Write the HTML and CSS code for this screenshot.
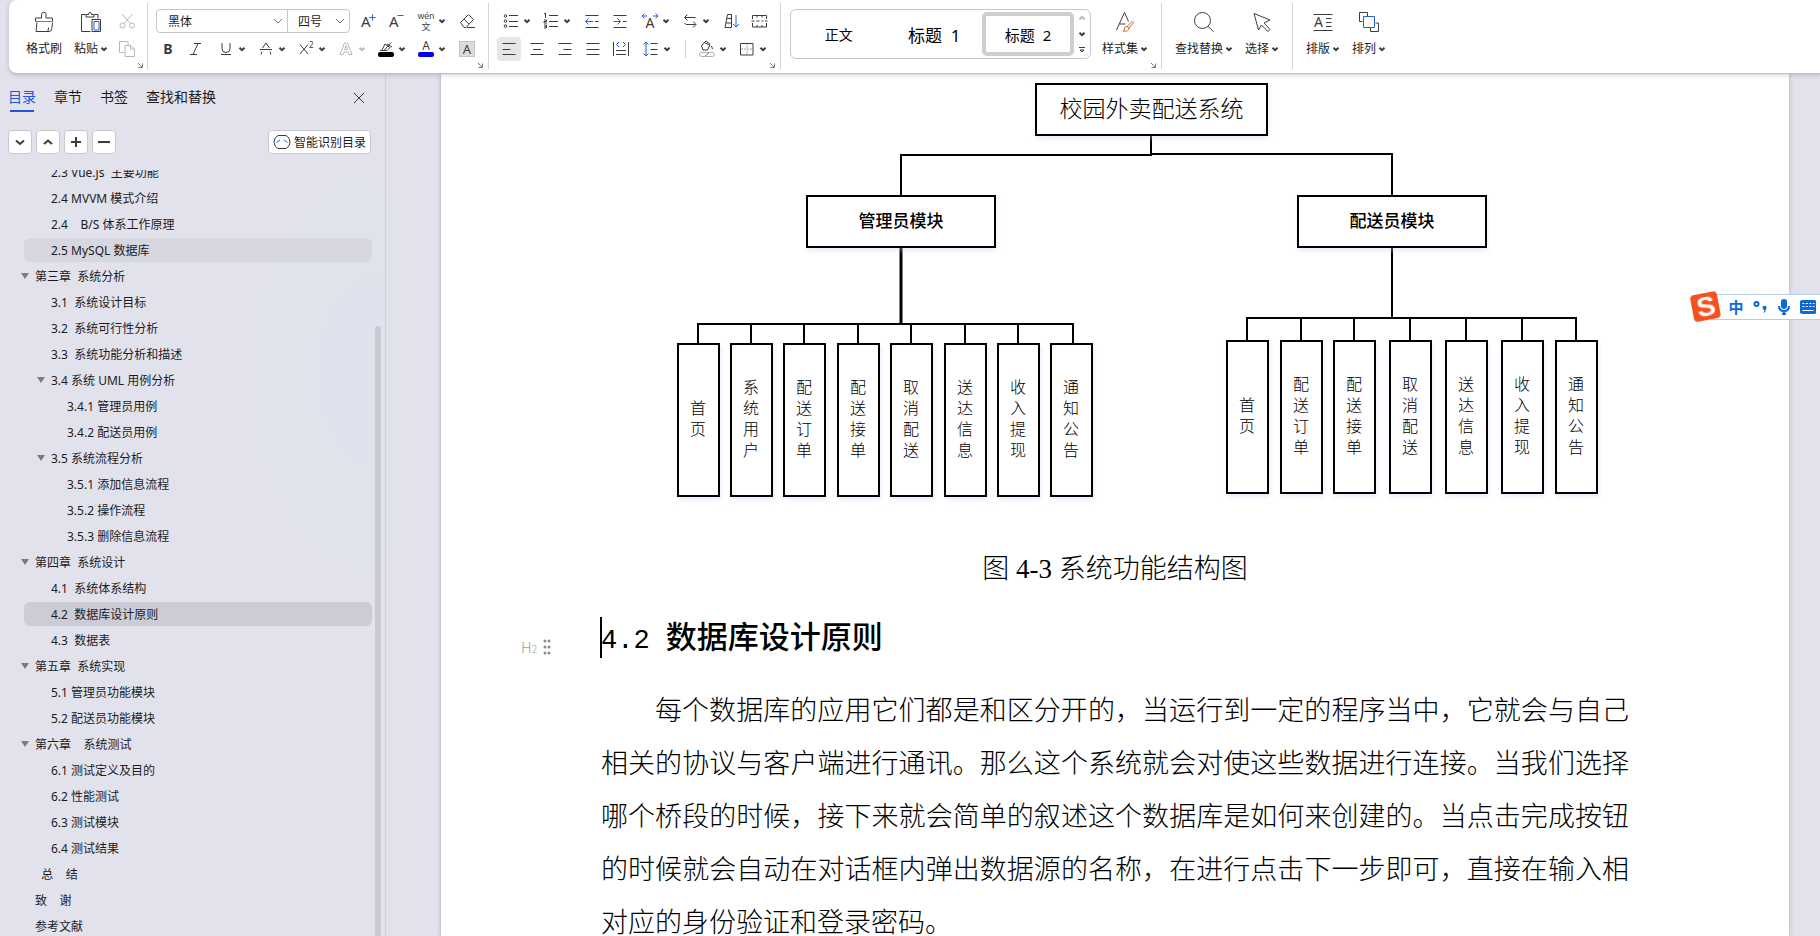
FILE: index.html
```html
<!DOCTYPE html>
<html lang="zh-CN">
<head>
  <meta charset="UTF-8" />
  <meta name="viewport" content="width=device-width, initial-scale=1" />
  <title>校园外卖配送系统</title>
  <link rel="stylesheet" href="styles.css">
</head>
<body>
  <svg class="defs" aria-hidden="true">
    <symbol id="chev" viewBox="0 0 8 8"><path d="M1.5 2.8 4 5.2 6.5 2.8" /></symbol>
    <symbol id="corner" viewBox="0 0 8 8"><path d="M2 2l4 4M6.5 2.5v4h-4" /></symbol>
  </svg>

  <header class="ribbon">
    <section class="group group-clip">
      <button class="big">
        <svg class="icon" viewBox="0 0 24 24"><path d="M9.5 8V4.5a2 2 0 0 1 4.500 0V8h6.500v3.500M3.500 11.500V8h6M5 12.500 4 21.500h13.500q2 0 2.300-3l.7-6M15.500 21.500q1-1 1-4" /><path class="orange" d="M3.500 11.500h17" /></svg>
        <span class="label">格式刷</span>
      </button>
      <button class="big">
        <svg class="icon" viewBox="0 0 24 24"><path d="M6.5 4.500H2.500v17h9M15.500 4.500h3.500v4M7 7V4.500h2.500q0-2 1.500-2t1.500 2H15V7zM13 21.500V9.500h8.500v12z" /><path class="blue" d="M15 11.500h5v8.500h-5z" /></svg>
        <span class="label">粘贴<svg class="chev"><use href="#chev" /></svg></span>
      </button>
      <div class="stack">
        <button class="tool off" aria-label="剪切"><svg class="icon" viewBox="0 0 24 24"><path d="M7 5l8.500 9.500M17.500 5 9 14.500" /><circle cx="7.500" cy="16.500" r="2.500" /><circle cx="17" cy="16.500" r="2.500" /></svg></button>
        <button class="tool off" aria-label="复制"><svg class="icon" viewBox="0 0 24 24"><path d="M9 15.500H4.500v-11H13V8M10 8.500h6l3.500 3.500v7.500H10zM15.500 8.500V12h4" /></svg></button>
      </div>
      <button class="corner" aria-label="剪贴板"><svg><use href="#corner" /></svg></button>
    </section>

    <section class="group">
      <div class="stack">
        <div class="row">
          <div class="font-box">
            <select class="font-name" aria-label="字体"><option>黑体</option></select>
            <select class="font-size" aria-label="字号"><option>四号</option></select>
          </div>
          <button class="tool" aria-label="增大字号"><svg class="icon" viewBox="0 0 24 24"><text x="5" y="18" font-size="15">A</text><path class="blue" d="M13.500 8.500h6M16.500 5.500v6" /></svg></button>
          <button class="tool" aria-label="减小字号"><svg class="icon" viewBox="0 0 24 24"><text x="5" y="18" font-size="15">A</text><path class="blue" d="M13.500 6.500h6" /></svg></button>
          <button class="tool drop" aria-label="拼音指南"><svg class="icon" viewBox="0 0 24 24"><text class="pinyin" x="12" y="10" font-size="9" text-anchor="middle">wén</text><text x="12" y="21" font-size="9" text-anchor="middle">文</text></svg><svg class="chev"><use href="#chev" /></svg></button>
          <button class="tool" aria-label="清除格式"><svg class="icon" viewBox="0 0 24 24"><path d="M5.500 13.500 13.500 5.500l5 5-7.500 8H9zM9 10l5 5M12 18.500h8" /></svg></button>
        </div>
        <div class="row">
          <button class="tool" aria-label="加粗"><svg class="icon" viewBox="0 0 24 24"><text x="12" y="17" font-size="14" font-weight="700" text-anchor="middle">B</text></svg></button>
          <button class="tool" aria-label="倾斜"><svg class="icon" viewBox="0 0 24 24"><path d="M10 6.500h7M6 17.500h7M14 6.500 9 17.500" /></svg></button>
          <button class="tool drop" aria-label="下划线"><svg class="icon" viewBox="0 0 24 24"><path d="M8 6v5.500a4 4 0 0 0 8 0V6M7 17.500h10" /></svg><svg class="chev"><use href="#chev" /></svg></button>
          <button class="tool drop" aria-label="删除线"><svg class="icon" viewBox="0 0 24 24"><path d="M8.500 11 12 6l3.500 5M6 12.500h12M8 14.500 7 17.500M16 14.500l1 3" /></svg><svg class="chev"><use href="#chev" /></svg></button>
          <button class="tool drop" aria-label="上标"><svg class="icon" viewBox="0 0 24 24"><path d="M6 7.500l8 9.500M14 7.500 6 17" /><text x="15" y="11" font-size="8">2</text></svg><svg class="chev"><use href="#chev" /></svg></button>
          <button class="tool drop off" aria-label="文字效果"><svg class="icon" viewBox="0 0 24 24"><path d="M6 17.500 10.500 6h3L18 17.500h-3l-1-2.500h-4l-1 2.500zM10.500 12.500h3L12 8.500z" /></svg><svg class="chev"><use href="#chev" /></svg></button>
          <button class="tool drop" aria-label="突出显示"><svg class="icon" viewBox="0 0 24 24"><path d="M6 13.500h4l7-8M8 13l3-6 5 3.500-3 3h-4M13 7l5 3" /><rect class="bar-black" x="4" y="15" width="16" height="5" rx="2" /></svg><svg class="chev"><use href="#chev" /></svg></button>
          <button class="tool drop" aria-label="字体颜色"><svg class="icon" viewBox="0 0 24 24"><text x="12" y="13" font-size="12" text-anchor="middle">A</text><rect class="bar-blue" x="4" y="15" width="16" height="5" rx="2" /></svg><svg class="chev"><use href="#chev" /></svg></button>
          <button class="tool" aria-label="字符底纹"><svg class="icon" viewBox="0 0 24 24"><rect class="shade" x="4.500" y="4.500" width="15" height="15" /><text x="12" y="17" font-size="13" text-anchor="middle">A</text></svg></button>
        </div>
      </div>
      <button class="corner" aria-label="字体设置"><svg><use href="#corner" /></svg></button>
    </section>

    <section class="group">
      <div class="stack">
        <div class="row">
          <button class="tool drop" aria-label="项目符号"><svg class="icon" viewBox="0 0 24 24"><circle cx="6.500" cy="7" r="1.300" /><circle cx="6.500" cy="12" r="1.300" /><circle cx="6.500" cy="17" r="1.300" /><path d="M10 6.500h9M10 12.500h9M10 17.500h9" /></svg><svg class="chev"><use href="#chev" /></svg></button>
          <button class="tool drop" aria-label="编号"><svg class="icon" viewBox="0 0 24 24"><path d="M5 5l1.500-1v5M5 11h2.500v1.500H5V14h3M5 16h2.500v3H5M5.500 17.500h2M10 6.500h9M10 12.500h9M10 17.500h9" /></svg><svg class="chev"><use href="#chev" /></svg></button>
          <button class="tool" aria-label="减少缩进"><svg class="icon" viewBox="0 0 24 24"><path d="M5.500 6.500h13M15 12.500h3.500M5.500 18.500h13" /><path class="blue" d="M13 12.500H6M8.500 9.500l-3 3 3 3" /></svg></button>
          <button class="tool" aria-label="增加缩进"><svg class="icon" viewBox="0 0 24 24"><path d="M5.500 6.500h13M15 12.500h3.500M5.500 18.500h13" /><path class="blue" d="M5.500 12.500H12M9.500 9.500l3 3-3 3" /></svg></button>
          <button class="tool drop" aria-label="中文版式"><svg class="icon" viewBox="0 0 24 24"><text x="12" y="19" font-size="14" text-anchor="middle">A</text><path class="blue" d="M4 7h5M15 7h5M6.500 4.500 4 7l2.500 2.500M17.500 4.500 20 7l-2.500 2.500" /></svg><svg class="chev"><use href="#chev" /></svg></button>
          <button class="tool drop" aria-label="换行"><svg class="icon" viewBox="0 0 24 24"><path d="M17.500 8.500H7M9.500 5.500 6.500 8.500l3 3M8 15.500h9.500M15 12.500l3 3-3 3M6.500 14l1.500 1.500" /></svg><svg class="chev"><use href="#chev" /></svg></button>
          <button class="tool" aria-label="排序"><svg class="icon" viewBox="0 0 24 24"><path d="M6 18.500 8.500 5.500h4v13zM8 9.500h4.500M7 14h5.500" /><path class="blue" d="M17 6v12M14 15l3 3 3-3" /></svg></button>
          <button class="tool" aria-label="制表"><svg class="icon" viewBox="0 0 24 24"><path d="M5.500 10V6.500h14V10M5.500 14v4h14v-4M4.500 12h3M9.500 12h3M14.500 12h2M18 12h2.500M10 6.500v2M15 6.500v2M10 16v2M15 16v2" /></svg></button>
        </div>
        <div class="row">
          <button class="tool active" aria-label="左对齐"><svg class="icon" viewBox="0 0 24 24"><path d="M5.500 6.500h13M5.500 12.500h8M5.500 17.500h13" /></svg></button>
          <button class="tool" aria-label="居中"><svg class="icon" viewBox="0 0 24 24"><path d="M5.500 6.500h13M8 12.500h8M5.500 17.500h13" /></svg></button>
          <button class="tool" aria-label="右对齐"><svg class="icon" viewBox="0 0 24 24"><path d="M5.500 6.500h13M10.500 12.500h8M5.500 17.500h13" /></svg></button>
          <button class="tool" aria-label="两端对齐"><svg class="icon" viewBox="0 0 24 24"><path d="M5.500 6.500h13M5.500 12.500h13M5.500 17.500h13" /></svg></button>
          <button class="tool" aria-label="分散对齐"><svg class="icon" viewBox="0 0 24 24"><path d="M4.500 5v14M19.500 5v14M7 13.500h10M7 17.500h10" /><path class="blue" d="M10 5 7.500 7.500 10 10M14 5l2.500 2.500L14 10" /></svg></button>
          <button class="tool drop" aria-label="行距"><svg class="icon" viewBox="0 0 24 24"><path d="M11.500 6.500h7M11.500 12.500h7M11.500 17.500h7" /><path class="blue" d="M7 5v14M4.500 7.500 7 5l2.500 2.500M4.500 16.500 7 19l2.500-2.500" /></svg><svg class="chev"><use href="#chev" /></svg></button>
          <span class="sep"></span>
          <button class="tool drop" aria-label="底纹颜色"><svg class="icon" viewBox="0 0 24 24"><path d="M9 5.500l6 2.500-2.500 5H8L6.500 9zM9 6l2-2 4 3M16.500 9l1 3" /><rect class="bar-none" x="4.500" y="15.500" width="15" height="4" rx="2" /><path class="red" d="M10 19l4-3" /></svg><svg class="chev"><use href="#chev" /></svg></button>
          <button class="tool drop" aria-label="边框"><svg class="icon" viewBox="0 0 24 24"><path class="dots" d="M12 6v12M6 12h12" /><path d="M5.500 6.500h12.500v11.500H5.500z" /></svg><svg class="chev"><use href="#chev" /></svg></button>
        </div>
      </div>
      <button class="corner" aria-label="段落设置"><svg><use href="#corner" /></svg></button>
    </section>

    <section class="group group-styles">
      <div class="style-box">
        <button class="style-item style-body">正文</button>
        <button class="style-item style-h1">标题  1</button>
        <button class="style-item style-h2">标题  2</button>
        <div class="style-scroll">
          <button class="off" aria-label="上一行"><svg class="chev up"><use href="#chev" /></svg></button>
          <button aria-label="下一行"><svg class="chev"><use href="#chev" /></svg></button>
          <button aria-label="更多样式"><svg class="more" viewBox="0 0 8 8"><path d="M1 1.500h6M2 4l2 2 2-2z" /></svg></button>
        </div>
      </div>
      <button class="big">
        <svg class="icon" viewBox="0 0 24 24"><path d="M3.500 20 11.500 2.500l4 9M6.500 14h6" /><path class="orange" d="M20 10.500l-6 6M21 12l-5 6M14 16.500l2 1.500q0 4-6 3 2-1 1.500-3 1-2 2.500-1.500z" /></svg>
        <span class="label">样式集<svg class="chev"><use href="#chev" /></svg></span>
      </button>
      <button class="corner" aria-label="样式设置"><svg><use href="#corner" /></svg></button>
    </section>

    <section class="group group-wide">
      <button class="big">
        <svg class="icon" viewBox="0 0 24 24"><circle cx="10.500" cy="10.500" r="8" /><path d="M16 16.500l5.500 5" /></svg>
        <span class="label">查找替换<svg class="chev"><use href="#chev" /></svg></span>
      </button>
      <button class="big">
        <svg class="icon" viewBox="0 0 24 24"><path d="M4 3.500 20 10l-6 3 6 6.500-2 2-6.500-6.500L8.500 20z" /></svg>
        <span class="label">选择<svg class="chev"><use href="#chev" /></svg></span>
      </button>
    </section>

    <section class="group group-wide group-last">
      <button class="big">
        <svg class="icon" viewBox="0 0 24 24"><path d="M2.500 4.500h19M2.500 20.500h19M15 8.500h5.500M15 12.500h5.500M15 16.500h5.500" /><text x="3" y="17" font-size="14">A</text></svg>
        <span class="label">排版<svg class="chev"><use href="#chev" /></svg></span>
      </button>
      <button class="big">
        <svg class="icon" viewBox="0 0 24 24"><path d="M5.500 11.500h-3v-9h8v3.500M18.500 13h3v8.500h-8V18" /><path class="blue" d="M6.500 6.500h11v11h-11z" /></svg>
        <span class="label">排列<svg class="chev"><use href="#chev" /></svg></span>
      </button>
    </section>
  </header>

  <div class="workspace">
    <aside class="nav">
      <div class="tabs">
        <button class="tab current">目录</button>
        <button class="tab">章节</button>
        <button class="tab">书签</button>
        <button class="tab">查找和替换</button>
        <button class="close" aria-label="关闭"><svg viewBox="0 0 12 12"><path d="M1 1l10 10M11 1 1 11" /></svg></button>
      </div>
      <div class="nav-tools">
        <button class="sq" aria-label="展开"><svg viewBox="0 0 12 12"><path d="M2 4.500l4 3.500 4-3.500" /></svg></button>
        <button class="sq" aria-label="收起"><svg viewBox="0 0 12 12"><path d="M2 8l4-3.500L10 8" /></svg></button>
        <button class="sq" aria-label="添加"><svg viewBox="0 0 12 12"><path d="M1 6h10M6 1v10" /></svg></button>
        <button class="sq" aria-label="删除"><svg viewBox="0 0 12 12"><path d="M0 6h12" /></svg></button>
        <button class="smart"><svg viewBox="0 0 18 18"><path d="M5 2.500h8q4 2 4 6.500t-4 6.500H5Q1 13.500 1 9t4-6.500z" /><path class="blue" d="M3.500 9.500 7 7M11 7l3.500 2.500" /></svg>智能识别目录</button>
      </div>
      <div class="outline">
        <ul class="tree">
          <li class="l2"><a href="#">2.3 Vue.js  主要功能</a></li>
          <li class="l2"><a href="#">2.4 MVVM 模式介绍</a></li>
          <li class="l2"><a href="#">2.4    B/S 体系工作原理</a></li>
          <li class="l2 hover"><a href="#">2.5 MySQL 数据库</a></li>
          <li class="l1"><button class="toggle" aria-label="折叠"></button><a href="#">第三章  系统分析</a></li>
          <li class="l2"><a href="#">3.1  系统设计目标</a></li>
          <li class="l2"><a href="#">3.2  系统可行性分析</a></li>
          <li class="l2"><a href="#">3.3  系统功能分析和描述</a></li>
          <li class="l2"><button class="toggle" aria-label="折叠"></button><a href="#">3.4 系统 UML 用例分析</a></li>
          <li class="l3"><a href="#">3.4.1 管理员用例</a></li>
          <li class="l3"><a href="#">3.4.2 配送员用例</a></li>
          <li class="l2"><button class="toggle" aria-label="折叠"></button><a href="#">3.5 系统流程分析</a></li>
          <li class="l3"><a href="#">3.5.1 添加信息流程</a></li>
          <li class="l3"><a href="#">3.5.2 操作流程</a></li>
          <li class="l3"><a href="#">3.5.3 删除信息流程</a></li>
          <li class="l1"><button class="toggle" aria-label="折叠"></button><a href="#">第四章  系统设计</a></li>
          <li class="l2"><a href="#">4.1  系统体系结构</a></li>
          <li class="l2 selected"><a href="#">4.2  数据库设计原则</a></li>
          <li class="l2"><a href="#">4.3  数据表</a></li>
          <li class="l1"><button class="toggle" aria-label="折叠"></button><a href="#">第五章  系统实现</a></li>
          <li class="l2"><a href="#">5.1 管理员功能模块</a></li>
          <li class="l2"><a href="#">5.2 配送员功能模块</a></li>
          <li class="l1"><button class="toggle" aria-label="折叠"></button><a href="#">第六章    系统测试</a></li>
          <li class="l2"><a href="#">6.1 测试定义及目的</a></li>
          <li class="l2"><a href="#">6.2 性能测试</a></li>
          <li class="l2"><a href="#">6.3 测试模块</a></li>
          <li class="l2"><a href="#">6.4 测试结果</a></li>
          <li class="l1"><a href="#">  总    结</a></li>
          <li class="l1"><a href="#">致    谢</a></li>
          <li class="l1"><a href="#">参考文献</a></li>
        </ul>
        <div class="thumb"></div>
      </div>
    </aside>

    <main class="desk">
      <article class="sheet">
        <figure>
          <div class="chart">
            <!-- connectors -->
            <svg class="lines" viewBox="0 0 1028 470">
              <path d="M550 62v20M300 122V82h251M550 81h241v41" />
              <path class="thick" d="M300 174v77" />
              <path d="M97 272v-21h375v21M150 251v21M203 251v21M257 251v21M310 251v21M364 251v21M417 251v21" />
              <path d="M791 174v71M646 267v-22h329v22M700 245v22M753 245v22M809 245v22M865 245v22M921 245v22" />
            </svg>
            <div class="node root">校园外卖配送系统</div>
            <div class="node module admin">管理员模块</div>
            <div class="node module rider">配送员模块</div>

            <div class="node leaf a1">首页</div>
            <div class="node leaf a2">系统用户</div>
            <div class="node leaf a3">配送订单</div>
            <div class="node leaf a4">配送接单</div>
            <div class="node leaf a5">取消配送</div>
            <div class="node leaf a6">送达信息</div>
            <div class="node leaf a7">收入提现</div>
            <div class="node leaf a8">通知公告</div>

            <div class="node leaf r1">首页</div>
            <div class="node leaf r2">配送订单</div>
            <div class="node leaf r3">配送接单</div>
            <div class="node leaf r4">取消配送</div>
            <div class="node leaf r5">送达信息</div>
            <div class="node leaf r6">收入提现</div>
            <div class="node leaf r7">通知公告</div>
          </div>
          <figcaption>图 4-3 系统功能结构图</figcaption>
        </figure>

        <h2><span class="mark">H<sub>2</sub><svg viewBox="0 0 8 16"><path d="M2 2h0M6 2h0M2 8h0M6 8h0M2 14h0M6 14h0" /></svg></span><span class="caret"></span><span class="num">4.2 </span>数据库设计原则</h2>
        <p>每个数据库的应用它们都是和区分开的，当运行到一定的程序当中，它就会与自己相关的协议与客户端进行通讯。那么这个系统就会对使这些数据进行连接。当我们选择哪个桥段的时候，接下来就会简单的叙述这个数据库是如何来创建的。当点击完成按钮的时候就会自动在对话框内弹出数据源的名称，在进行点击下一步即可，直接在输入相对应的身份验证和登录密码。</p>
      </article>
    </main>
  </div>

  <div class="ime">
    <svg class="ime-logo" viewBox="0 0 34 34"><g transform="rotate(-11 17 17)"><rect x="3" y="3" width="27" height="27" rx="4" /><text x="17" y="26" font-size="28" text-anchor="middle">S</text></g></svg>
    <div class="ime-bar">
      <button>中</button>
      <button aria-label="标点"><svg viewBox="0 0 16 16"><circle class="ring" cx="4.500" cy="5" r="2" /><path d="M10.500 8.500a2 2 0 1 1 3.500 1.500q0 3-2.500 4 1-1.500.8-3-1.500-.5-1.800-2.500z" /></svg></button>
      <button aria-label="语音"><svg viewBox="0 0 16 16"><rect x="5" y="0" width="6" height="10" rx="3" /><path class="ring" d="M3 7q0 5 5 5t5-5M8 12v2.500" /><path d="M6 14h4v2H6z" /></svg></button>
      <button aria-label="键盘"><svg viewBox="0 0 16 16"><path d="M2 1h13l1 1v12l-1 1H2l-2-1V2z" /><path class="keys" d="M2.500 4.500h2M6 4.500h2M9.500 4.500h2M13 4.500h1.500M2.500 7.500h2M6 7.500h2M9.500 7.500h2M13 7.500h1.500M2.500 11.500h11" /></svg></button>
    </div>
  </div>
</body>
</html>
```

FILE: styles.css
```css
* {
  box-sizing: border-box;
}

body {
  margin: 0;
  height: 100vh;
  display: flex;
  flex-direction: column;
  overflow: hidden;
  background: #e2e2ec;
  color: #1c1c1e;
  font-family: "Noto Sans", "Noto Sans CJK SC", sans-serif;
  font-size: 12px;
}

button {
  padding: 0;
  border: none;
  background: none;
  color: inherit;
  font: inherit;
  cursor: pointer;
}

svg {
  display: block;
  fill: none;
  stroke: #3c3c3c;
}

svg text {
  fill: #3c3c3c;
  stroke: none;
}

.defs {
  display: none;
}

/* ribbon */

.ribbon {
  display: flex;
  flex: none;
  height: 74px;
  margin: 0 0 -1px 9px;
  background: #fff;
  border-bottom: 1px solid #bfc0c8;
  border-radius: 8px 0 0 8px;
  box-shadow: 0 1px 4px rgba(60, 60, 90, 0.25);
  position: relative;
  z-index: 1;
}

.group {
  display: flex;
  align-items: flex-start;
  height: 66px;
  margin-top: 3px;
  padding: 6px 4px 0 8px;
  border-right: 1px solid #d4d4d8;
}

.group-clip {
  padding-left: 17px;
  padding-right: 3px;
}

.group-clip .big {
  margin-right: 12px;
}

.group-clip .big + .big {
  margin-right: 7px;
}

.group-styles {
  padding-left: 9px;
}

.group-wide {
  gap: 12px;
  padding-left: 13px;
  padding-right: 13px;
}

.group-last {
  border-right: none;
}

.stack {
  display: flex;
  flex-direction: column;
  gap: 4px;
}

.row {
  display: flex;
  gap: 4px;
}

.big {
  display: flex;
  flex-direction: column;
  align-items: center;
  gap: 5px;
  padding-top: 1px;
}

.label {
  display: flex;
  align-items: center;
  gap: 2px;
  line-height: 20px;
  white-space: nowrap;
}

.icon {
  width: 24px;
  height: 24px;
  flex: none;
}

.pinyin {
  font-family: "Liberation Sans", sans-serif;
}

.chev {
  width: 8px;
  height: 8px;
  stroke-width: 2;
  flex: none;
}

.up {
  transform: rotate(180deg);
}

.more {
  width: 8px;
  height: 8px;
}

.tool {
  display: flex;
  align-items: center;
  width: 24px;
  height: 24px;
  border-radius: 4px;
}

.drop {
  width: 36px;
  padding: 0 2px;
}

.drop + .tool:not(.drop) {
  margin-left: 3px;
}

.active {
  background: #e6e6e6;
}

.off svg {
  stroke: #b8b8b8;
}

.corner {
  align-self: flex-end;
  margin-left: -3px;
}

.corner svg {
  width: 8px;
  height: 8px;
  stroke: #77777a;
}

.group-styles .corner {
  margin-left: 1px;
}

.group-styles .big {
  margin-left: 11px;
}

svg .blue {
  stroke: #2a5ce0;
}

svg .orange {
  stroke: #d0602a;
}

svg .red {
  stroke: #e05050;
}

.bar-black {
  fill: #000;
  stroke: none;
}

.bar-blue {
  fill: #0000f0;
  stroke: none;
}

.bar-none {
  stroke: #b0b0b0;
}

.shade {
  fill: #dcdcdc;
  stroke: #c4c4c4;
}

.dots {
  stroke: #aaa;
  stroke-dasharray: 2 1;
}

.sep {
  width: 1px;
  height: 18px;
  margin: 3px 3px 0 8px;
  background: #d4d4d8;
}

.font-box {
  display: flex;
  width: 194px;
  height: 24px;
  margin-right: 2px;
  border: 1px solid #c6c6c8;
  border-radius: 4px;
}

.font-box select {
  appearance: none;
  border: none;
  color: #1c1c1e;
  font: inherit;
  outline: none;
  background: url("data:image/svg+xml,%3Csvg xmlns='http://www.w3.org/2000/svg' width='10' height='6'%3E%3Cpath d='M1 1l4 4 4-4' fill='none' stroke='%23777'/%3E%3C/svg%3E") no-repeat right 4px center;
}

.font-name {
  flex: 1;
  padding: 0 20px 0 11px;
}

.font-box .font-size {
  width: 62px;
  padding: 0 18px 0 10px;
  border-left: 1px solid #c6c6c8;
}

.style-box {
  display: flex;
  width: 301px;
  height: 50px;
  border: 1px solid #c6c6c8;
  border-radius: 6px;
}

.style-item {
  flex: 1;
  color: #000;
  white-space: pre;
}

.style-body {
  font-size: 14px;
}

.style-h1 {
  font-size: 17px;
}

.style-h2 {
  flex: none;
  width: 92px;
  margin: 2px 0;
  border: 4px solid #cecece;
  border-radius: 5px;
  font-size: 15px;
}

.style-scroll {
  display: flex;
  flex-direction: column;
  justify-content: space-around;
  align-items: center;
  width: 16px;
}

/* outline pane */

.workspace {
  display: flex;
  flex: 1;
  min-height: 0;
}

.nav {
  display: flex;
  flex-direction: column;
  flex: none;
  width: 386px;
  border-right: 1px solid #d0d0cc;
  background: radial-gradient(ellipse 200px 300px at 100% 300px, #dfe3ec, #e2e2ec);
}

.tabs {
  display: flex;
  gap: 18px;
  padding: 14px 20px 0 8px;
  font-size: 14px;
}

.tab {
  padding-bottom: 5px;
  line-height: 20px;
}

.current {
  padding-bottom: 0;
  color: #2255e0;
}

.current::after {
  content: "";
  display: block;
  height: 2px;
  margin: 3px 2px 0;
  background: #2255e0;
}

.close {
  margin-left: auto;
  padding-bottom: 3px;
}

.close svg {
  width: 12px;
  height: 12px;
}

.nav-tools {
  display: flex;
  gap: 4px;
  padding: 18px 14px 0 8px;
}

.sq,
.smart {
  display: flex;
  align-items: center;
  justify-content: center;
  height: 24px;
  border: 1px solid #c8c8d0;
  border-radius: 4px;
  background: #fff;
}

.sq {
  width: 24px;
}

.sq svg {
  width: 12px;
  height: 12px;
  stroke-width: 2;
}

.smart {
  gap: 3px;
  margin-left: auto;
  padding: 0 4px;
}

.smart svg {
  width: 18px;
  height: 18px;
}

.outline {
  display: flex;
  flex: 1;
  min-height: 0;
  margin-top: 16px;
  overflow: hidden;
}

.tree {
  flex: 1;
  margin: -10px 3px 0 24px;
  padding: 0;
  list-style: none;
}

.tree li {
  display: flex;
  align-items: center;
  height: 24px;
  margin-bottom: 2px;
  border-radius: 6px;
}

.tree a {
  color: #1c1c1e;
  text-decoration: none;
  white-space: pre;
}

.l1 {
  padding-left: 11px;
}

.l2 {
  padding-left: 27px;
}

.l3 {
  padding-left: 43px;
}

.hover {
  background: #d6d7df;
}

.selected {
  background: #cbccd5;
}

.toggle {
  width: 14px;
  height: 14px;
  margin-left: -14px;
}

.toggle::before {
  content: "";
  display: block;
  width: 0;
  border: 4px solid transparent;
  border-top: 6px solid #7c7c80;
  border-bottom: none;
}

.thumb {
  width: 6px;
  margin: 156px 4px 0 0;
  border-radius: 3px 3px 0 0;
  background: #c9cad1;
}

/* document */

.desk {
  flex: 1;
  padding: 0 31px 0 55px;
}

.sheet {
  height: 100%;
  padding: 0 160px;
  background: #fff;
  box-shadow: 0 0 4px rgba(60, 60, 90, 0.35);
  color: #000;
  font-family: "Liberation Serif", "Noto Sans CJK SC", serif;
  font-size: 27px;
  font-weight: 300;
  line-height: 53px;
}

figure {
  margin: 0;
}

.chart {
  position: relative;
  width: 1028px;
  height: 470px;
  margin: 0 auto;
}

.lines {
  width: 1028px;
  height: 470px;
  stroke: #000;
  stroke-width: 2;
}

.thick {
  stroke-width: 3;
}

.node {
  position: absolute;
  display: flex;
  align-items: center;
  justify-content: center;
  border: 2px solid #000;
  background: #fff;
  box-shadow: 1px 3px 4px rgba(190, 210, 245, 0.35);
  line-height: 21px;
}

.root {
  left: 434px;
  top: 10px;
  width: 233px;
  height: 53px;
  font-size: 23px;
}

.module {
  top: 122px;
  width: 190px;
  height: 53px;
  font-size: 17px;
  font-weight: 500;
}

.admin { left: 205px; }
.rider { left: 696px; }

.leaf {
  width: 43px;
  height: 154px;
  padding: 0 11px 2px;
  font-size: 16px;
  word-break: break-all;
}

.a1, .a2, .a3, .a4, .a5, .a6, .a7, .a8 { top: 270px; }
.a1 { left: 76px; }
.a2 { left: 129px; }
.a3 { left: 182px; }
.a4 { left: 236px; }
.a5 { left: 289px; }
.a6 { left: 343px; }
.a7 { left: 396px; }
.a8 { left: 449px; }

.r1, .r2, .r3, .r4, .r5, .r6, .r7 { top: 267px; }
.r1 { left: 625px; }
.r2 { left: 679px; }
.r3 { left: 732px; }
.r4 { left: 788px; }
.r5 { left: 844px; }
.r6 { left: 900px; }
.r7 { left: 954px; }

figcaption {
  text-align: center;
}

h2 {
  position: relative;
  margin: 12px 0 24px;
  font-family: "Noto Sans CJK SC", sans-serif;
  font-size: 31px;
  font-weight: 500;
  line-height: 53px;
  white-space: pre;
}

.num {
  font-family: "Liberation Mono", monospace;
  font-size: 27px;
  line-height: 31px;
}

.caret {
  position: absolute;
  left: -1px;
  top: 9px;
  width: 2px;
  height: 41px;
  background: #000;
}

.mark {
  position: absolute;
  left: -80px;
  top: 27px;
  display: flex;
  align-items: center;
  color: #a0a0a0;
  font-size: 15px;
  font-weight: 300;
  line-height: 24px;
}

.mark sub {
  font-size: 10px;
  line-height: 20px;
  align-self: flex-end;
}

.mark svg {
  width: 8px;
  height: 16px;
  margin-left: 6px;
  stroke: #8c8c8c;
  stroke-width: 3;
  stroke-linecap: round;
}

p {
  margin: 0;
  text-align: justify;
  text-indent: 2em;
}

/* floating input method bar */

.ime {
  position: fixed;
  top: 290px;
  right: 0;
  z-index: 2;
  display: flex;
  align-items: center;
}

.ime-logo {
  position: relative;
  width: 34px;
  height: 34px;
  margin-right: -12px;
  overflow: visible;
  stroke: none;
  fill: #f4511e;
}

.ime-logo text {
  fill: #fff;
  font-family: "Liberation Sans", sans-serif;
  font-weight: 700;
}

.ime-bar {
  display: flex;
  align-items: center;
  gap: 8px;
  height: 26px;
  padding: 0 4px 0 16px;
  border: 1px solid #b4cdea;
  border-right: none;
  background: #fff;
  color: #0a6bd6;
  font-size: 15px;
  font-weight: 700;
}

.ime-bar button {
  width: 16px;
  line-height: 16px;
}

.ime-bar svg {
  width: 16px;
  height: 16px;
  fill: #0a6bd6;
  stroke: none;
}

.ime-bar .ring {
  fill: none;
  stroke: #0a6bd6;
  stroke-width: 2;
}

.ime-bar .keys {
  stroke: #fff;
  stroke-width: 1;
}
```
